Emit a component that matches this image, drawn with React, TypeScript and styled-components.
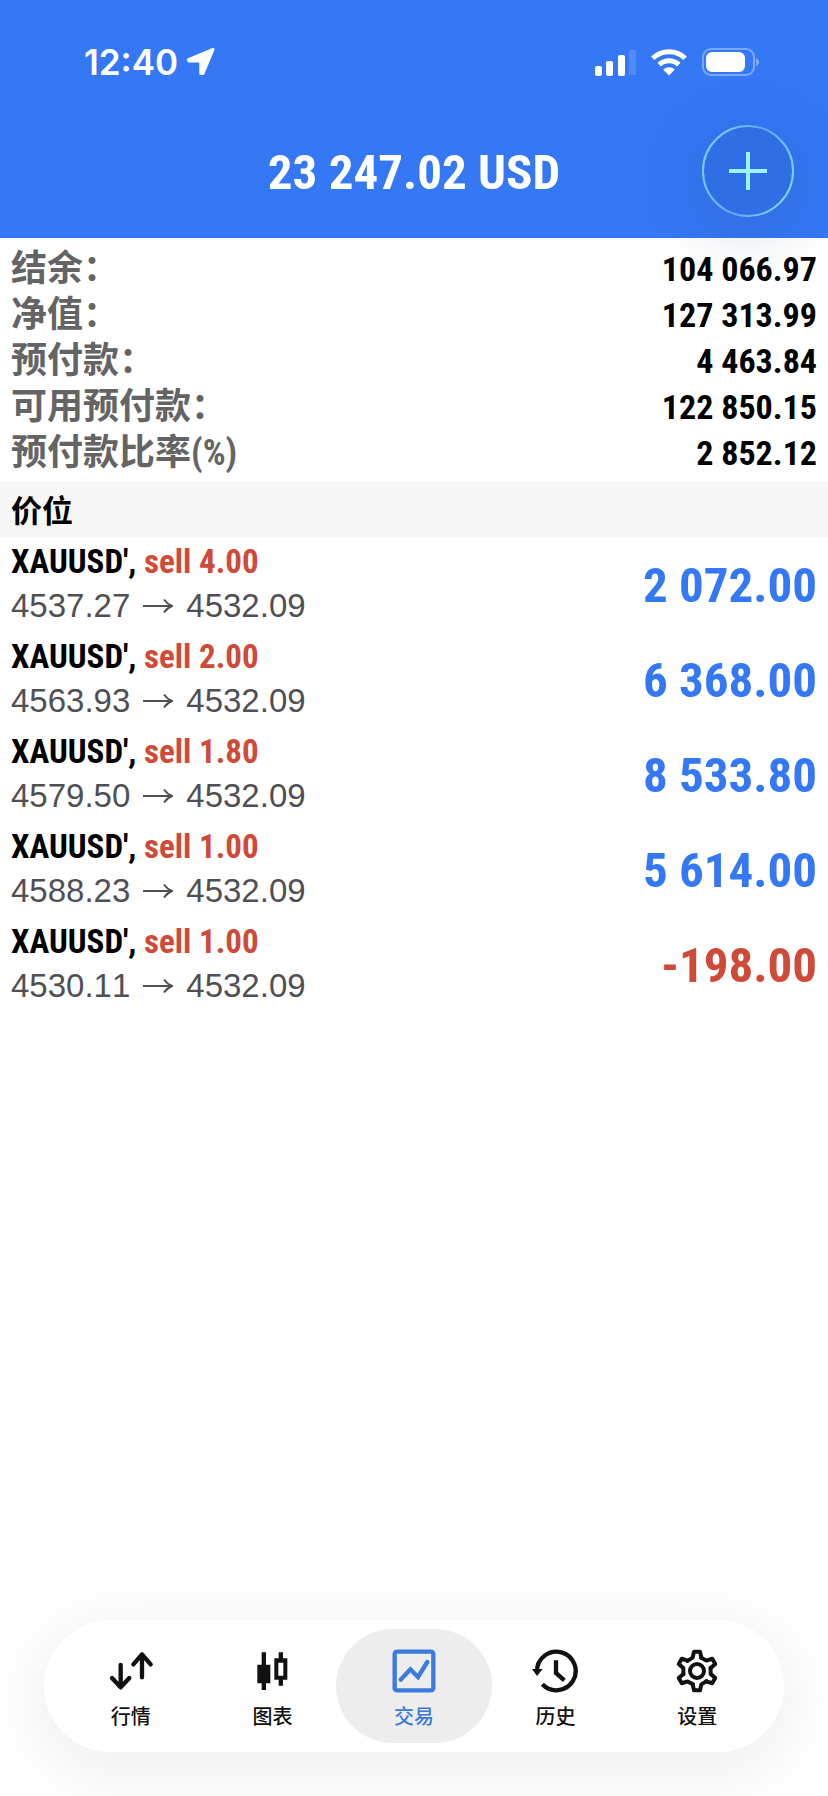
import React from 'react';
import styled, { createGlobalStyle } from 'styled-components';

const BLUE = '#3478f5';
const RED = '#cf4a38';
const condensed = '"Roboto Condensed", "Noto Sans CJK SC", sans-serif';
const regular = '"Liberation Sans", "Noto Sans CJK SC", sans-serif';
const cjk = '"Noto Sans CJK SC", sans-serif';

const GlobalStyle = createGlobalStyle`
  * { box-sizing: border-box; }
  body { margin: 0; background: #fff; font-family: ${regular}; color: #000; }
  h1, h2, dl, dd, ul, p { margin: 0; padding: 0; }
  button { border: 0; background: none; padding: 0; font: inherit; cursor: pointer; }
`;

const Page = styled.div`
  display: flex;
  flex-direction: column;
  min-height: 100vh;
  overflow-x: hidden;
`;

const Header = styled.header`
  background: ${BLUE};
  color: #fff;
`;

const StatusBar = styled.div`
  display: flex;
  align-items: center;
  justify-content: space-between;
  height: 104px;
  padding: 20px 68px 0 84px;
`;

const Clock = styled.div`
  display: flex;
  align-items: center;
  gap: 8px;
  font: 600 35px/44px Inter, sans-serif;
`;

const StatusIcons = styled.div`
  display: flex;
  align-items: center;
  gap: 14px;
`;

const TitleBar = styled.div`
  display: grid;
  grid-template-columns: 92px 1fr 92px;
  align-items: center;
  height: 134px;
  padding: 0 34px;
`;

const Title = styled.h1`
  grid-column: 2;
  padding-top: 4px;
  text-align: center;
  font: 700 49px/60px ${condensed};
`;

const AddButton = styled.button`
  display: block;
  position: relative;
  width: 92px;
  height: 92px;
  border-radius: 50%;
  box-shadow: 0 12px 56px 16px rgba(20, 40, 90, 0.1);
  background: rgba(20, 50, 120, 0.12);
  svg { display: block; }
`;

const Summary = styled.dl`
  padding: 8px 11px 6px;
`;

const SummaryRow = styled.div`
  display: flex;
  align-items: center;
  justify-content: space-between;
  height: 46px;
`;

const SummaryLabel = styled.dt`
  color: #646464;
  font: 700 36px/46px ${condensed};
`;

const SummaryValue = styled.dd`
  font: 700 34px/46px ${condensed};
`;

const SectionTitle = styled.h2`
  height: 56px;
  padding: 0 11px;
  background: #f7f7f7;
  font: 700 31px/54px ${cjk};
`;

const Positions = styled.ul`
  list-style: none;
`;

const Position = styled.li`
  display: flex;
  align-items: center;
  justify-content: space-between;
  height: 95px;
  padding: 0 11px;
`;

const Details = styled.div`
  padding-bottom: 4px;
`;

const Order = styled.p`
  font: 700 33px/44px ${condensed};
`;

const Side = styled.span`
  color: ${RED};
`;

const Quote = styled.p`
  display: flex;
  align-items: center;
  gap: 13px;
  color: #505054;
  font: 400 33px/44px ${regular};
  font-kerning: none;
`;

const Profit = styled.div<{ $loss: boolean }>`
  color: ${(p) => (p.$loss ? RED : BLUE)};
  font: 700 49px/60px ${condensed};
`;

const TabBar = styled.nav`
  position: sticky;
  bottom: 44px;
  display: grid;
  grid-template-columns: repeat(5, 1fr);
  margin: auto 44px 44px;
  padding: 9px 16px;
  border-radius: 66px;
  background: #fff;
  box-shadow: 0 14px 70px 6px rgba(0, 0, 0, 0.07);
`;

const Tab = styled.button<{ $active: boolean }>`
  display: flex;
  flex-direction: column;
  align-items: center;
  gap: 6px;
  height: 114px;
  margin: 0 -7px;
  padding-top: 18px;
  border-radius: 57px;
  background: ${(p) => (p.$active ? '#ededed' : 'transparent')};
  color: ${(p) => (p.$active ? '#3b7be0' : '#111')};
  font: 500 20px/30px ${cjk};
`;

const IconSlot = styled.span`
  display: flex;
  align-items: center;
  justify-content: center;
  width: 48px;
  height: 48px;
`;

const LocationIcon = () => (
  <svg width="30" height="30" viewBox="0 0 30 30" fill="#fff" stroke="#fff" strokeWidth="3" strokeLinejoin="round" aria-hidden="true">
    <path d="M27 2.500L2.500 12.600L3 14H14.800V26.500H17Z" />
  </svg>
);

const SignalIcon = () => (
  <svg width="41" height="27" viewBox="0 0 41 27" fill="#fff" aria-hidden="true">
    <rect x="0" y="17" width="7" height="10" rx="2" />
    <rect x="11" y="12" width="7" height="15" rx="2" />
    <rect x="23" y="6" width="7" height="21" rx="2" />
    <rect x="34" y="1" width="7" height="25" rx="1" opacity="0.14" />
  </svg>
);

const WifiIcon = () => (
  <svg width="38" height="28" viewBox="0 0 38 28" fill="none" stroke="#fff" strokeWidth="5" aria-hidden="true">
    <path d="M2.8 10.2a23.4 23.4 0 0 1 32.4 0" />
    <path d="M9.2 16.6a14.4 14.4 0 0 1 19.6 0" />
    <path d="M13.2 21.6a8.6 8.6 0 0 1 11.6 0L19 27.4z" fill="#fff" stroke="none" />
  </svg>
);

const BatteryIcon = () => (
  <svg width="58" height="28" viewBox="0 0 58 28" fill="none" aria-hidden="true">
    <rect x="1" y="1" width="51" height="26" rx="8" stroke="#fff" strokeOpacity="0.36" strokeWidth="2" />
    <rect x="4" y="4" width="39" height="20" rx="6" fill="#fff" />
    <path d="M54 10c4 1.600 4 6.400 0 8z" fill="#fff" fillOpacity="0.4" />
  </svg>
);

const PlusIcon = () => (
  <svg width="92" height="92" viewBox="0 0 92 92" fill="none" aria-hidden="true">
    <defs>
      <linearGradient id="ring" x1="0" y1="0.3" x2="1" y2="0.7">
        <stop offset="0" stopColor="#7fd0ff" />
        <stop offset="0.5" stopColor="#5fa4fa" />
        <stop offset="1" stopColor="#7fd8ff" />
      </linearGradient>
    </defs>
    <circle cx="46" cy="46" r="45" stroke="url(#ring)" strokeWidth="2" />
    <path d="M27 46H65M46 27V65" stroke="#9cf4ff" strokeWidth="4" />
  </svg>
);

const ArrowIcon = () => (
  <svg width="30" height="16" viewBox="0 0 30 16" fill="none" stroke="#505054" strokeWidth="2" aria-label="to">
    <path d="M0 8H28.500M21 1.500Q24 6 29 8Q24 10 21 14.500" />
  </svg>
);

const QuotesIcon = () => (
  <svg width="48" height="48" viewBox="0 0 144 144" fill="none" stroke="currentColor" strokeWidth="13" strokeLinecap="round" strokeLinejoin="round">
    <path d="M41 54V120M15 93L41 121L67 93" />
    <path d="M105 91V24M79 52L105 22L131 52" />
  </svg>
);

const ChartIcon = () => (
  <svg width="48" height="48" viewBox="0 0 144 144" fill="currentColor">
    <path d="M41 16H54V53H67V109H54V129H41V109H28V53H41Z" />
    <path fillRule="evenodd" d="M92 16H105V34H118V98H105V116H92V98H79V34H92ZM91 47V86H106V47Z" />
  </svg>
);

const TradeIcon = () => (
  <svg width="48" height="48" viewBox="0 0 144 144" fill="none" stroke="currentColor" strokeWidth="13">
    <rect x="14" y="14" width="116" height="116" rx="7" />
    <path d="M32 98L61 67L84 90L112 45" strokeLinecap="round" />
  </svg>
);

const HistoryIcon = () => (
  <svg width="48" height="48" viewBox="0 0 144 144" fill="none" stroke="currentColor" strokeWidth="13">
    <path d="M15 72A58 58 0 1 1 31 112" />
    <path d="M72 40V78L97 100" />
    <path d="M0 66H32L15 87Z" fill="currentColor" stroke="none" />
  </svg>
);

const SettingsIcon = () => (
  <svg width="48" height="48" viewBox="-72 -72 144 144" fill="none" stroke="currentColor" strokeWidth="12" strokeLinejoin="round" strokeLinecap="round">
    {[0, 60, 120, 180, 240, 300].map((angle) => (
      <path key={angle} d="M-28.600 -30.400L-13 -40L-9 -58H9L13 -40" transform={`rotate(${angle})`} />
    ))}
    <circle r="21" />
  </svg>
);

const summary = [
  ['结余：', '104 066.97'],
  ['净值：', '127 313.99'],
  ['预付款：', '4 463.84'],
  ['可用预付款：', '122 850.15'],
  ['预付款比率(%)', '2 852.12'],
];

const positions = [
  { volume: '4.00', open: '4537.27', profit: '2 072.00' },
  { volume: '2.00', open: '4563.93', profit: '6 368.00' },
  { volume: '1.80', open: '4579.50', profit: '8 533.80' },
  { volume: '1.00', open: '4588.23', profit: '5 614.00' },
  { volume: '1.00', open: '4530.11', profit: '-198.00' },
];

const tabs = [
  { label: '行情', icon: <QuotesIcon /> },
  { label: '图表', icon: <ChartIcon /> },
  { label: '交易', icon: <TradeIcon />, active: true },
  { label: '历史', icon: <HistoryIcon /> },
  { label: '设置', icon: <SettingsIcon /> },
];

export default function App() {
  return (
    <Page>
      <GlobalStyle />
      <Header>
        <StatusBar>
          <Clock>
            12:40
            <LocationIcon />
          </Clock>
          <StatusIcons>
            <SignalIcon />
            <WifiIcon />
            <BatteryIcon />
          </StatusIcons>
        </StatusBar>
        <TitleBar>
          <Title>23 247.02 USD</Title>
          <AddButton aria-label="新订单">
            <PlusIcon />
          </AddButton>
        </TitleBar>
      </Header>
      <main>
        <Summary>
          {summary.map(([label, value]) => (
            <SummaryRow key={label}>
              <SummaryLabel>{label}</SummaryLabel>
              <SummaryValue>{value}</SummaryValue>
            </SummaryRow>
          ))}
        </Summary>
        <SectionTitle>价位</SectionTitle>
        <Positions>
          {positions.map((p) => (
            <Position key={p.open}>
              <Details>
                <Order>
                  XAUUSD', <Side>sell {p.volume}</Side>
                </Order>
                <Quote>
                  {p.open}
                  <ArrowIcon />
                  4532.09
                </Quote>
              </Details>
              <Profit $loss={p.profit.startsWith('-')}>{p.profit}</Profit>
            </Position>
          ))}
        </Positions>
      </main>
      <TabBar>
        {tabs.map((t) => (
          <Tab key={t.label} $active={!!t.active} aria-current={t.active ? 'page' : undefined}>
            <IconSlot>{t.icon}</IconSlot>
            {t.label}
          </Tab>
        ))}
      </TabBar>
    </Page>
  );
}
